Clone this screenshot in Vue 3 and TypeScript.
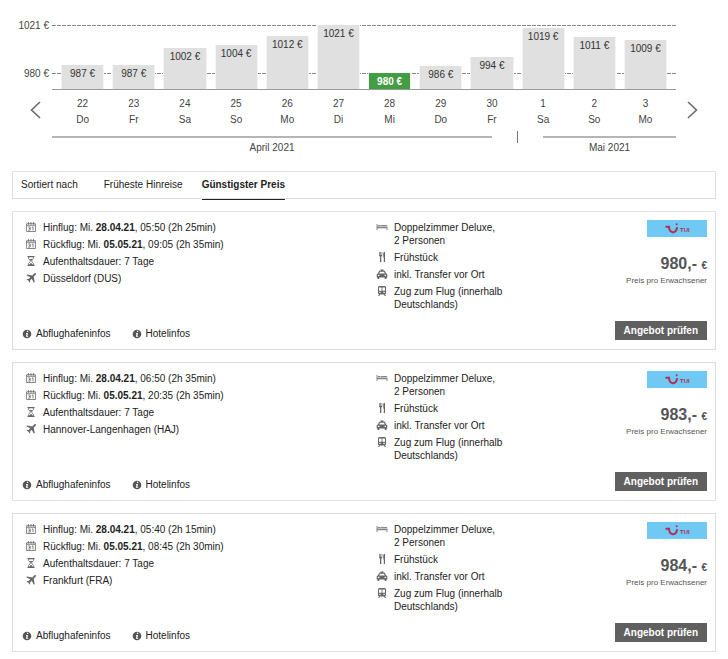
<script setup lang="ts">
interface Day {
  day: number
  weekday: string
  price: number
}

interface Offer {
  out: { date: string; rest: string }
  back: { date: string; rest: string }
  airport: string
  price: number
}

const days: Day[] = [
  { day: 22, weekday: 'Do', price: 987 },
  { day: 23, weekday: 'Fr', price: 987 },
  { day: 24, weekday: 'Sa', price: 1002 },
  { day: 25, weekday: 'So', price: 1004 },
  { day: 26, weekday: 'Mo', price: 1012 },
  { day: 27, weekday: 'Di', price: 1021 },
  { day: 28, weekday: 'Mi', price: 980 },
  { day: 29, weekday: 'Do', price: 986 },
  { day: 30, weekday: 'Fr', price: 994 },
  { day: 1, weekday: 'Sa', price: 1019 },
  { day: 2, weekday: 'So', price: 1011 },
  { day: 3, weekday: 'Mo', price: 1009 },
]

const prices = days.map((d) => d.price)
const minPrice = Math.min(...prices)
const maxPrice = Math.max(...prices)

// The cheapest bar keeps a base height so that its label still fits.
function barHeight(price: number): string {
  return `${Math.floor(16 + ((price - minPrice) / (maxPrice - minPrice)) * 48)}px`
}

const offers: Offer[] = [
  {
    out: { date: '28.04.21', rest: ', 05:50 (2h 25min)' },
    back: { date: '05.05.21', rest: ', 09:05 (2h 35min)' },
    airport: 'Düsseldorf (DUS)',
    price: 980,
  },
  {
    out: { date: '28.04.21', rest: ', 06:50 (2h 35min)' },
    back: { date: '05.05.21', rest: ', 20:35 (2h 35min)' },
    airport: 'Hannover-Langenhagen (HAJ)',
    price: 983,
  },
  {
    out: { date: '28.04.21', rest: ', 05:40 (2h 15min)' },
    back: { date: '05.05.21', rest: ', 08:45 (2h 30min)' },
    airport: 'Frankfurt (FRA)',
    price: 984,
  },
]
</script>

<template>
  <main class="page">
    <section class="calendar">
      <div class="side side-left">
        <span class="scale">{{ maxPrice }} €</span>
        <span class="scale">{{ minPrice }} €</span>
        <button class="arrow" type="button" aria-label="Zurück">
          <svg width="11" height="18" viewBox="0 0 11 18"><path d="M10 1 1.5 9 10 17" /></svg>
        </button>
      </div>

      <div class="chart">
        <div class="plot">
          <div class="guide guide-max"></div>
          <div class="guide guide-min"></div>
          <div v-for="d in days" :key="d.day" class="slot">
            <button
              type="button"
              class="bar"
              :class="{ active: d.price === minPrice }"
              :style="{ height: barHeight(d.price) }"
            >{{ d.price }} €</button>
          </div>
        </div>
        <div class="dates">
          <div v-for="d in days" :key="d.day" class="date">
            <span>{{ d.day }}</span>
            <span>{{ d.weekday }}</span>
          </div>
        </div>
        <div class="months">
          <div class="month april">April 2021</div>
          <div class="split"></div>
          <div class="month mai">Mai 2021</div>
        </div>
      </div>

      <div class="side side-right">
        <button class="arrow" type="button" aria-label="Weiter">
          <svg width="11" height="18" viewBox="0 0 11 18"><path d="M1 1 9.5 9 1 17" /></svg>
        </button>
      </div>
    </section>

    <nav class="sort">
      <span class="sort-label">Sortiert nach</span>
      <button type="button" class="tab">Früheste Hinreise</button>
      <button type="button" class="tab selected">Günstigster Preis</button>
    </nav>

    <section class="offers">
      <article v-for="o in offers" :key="o.price" class="card">
        <div class="flight">
          <ul class="list">
            <li v-for="(leg, i) in [o.out, o.back]" :key="i">
              <svg class="icon" viewBox="0 0 10 10">
                <path class="thin" d="M.6 1.7h8.800v7.800H.6zM.6 3.300h8.800M2.500 0v2.500M5 0v2.500M7.500 0v2.500" />
                <path class="thin" d="M2.200 4.900h2v3.200h-2M2.800 6.500h1.400M5.800 5.400l1.200-.6v3.600" />
              </svg>
              <span>{{ i === 0 ? 'Hinflug' : 'Rückflug' }}: Mi. <b>{{ leg.date }}</b>{{ leg.rest }}</span>
            </li>
            <li>
              <svg class="icon" viewBox="0 0 10 10">
                <path d="M1.500 0h7v1.300h-7zM1.500 8.700h7V10h-7z" />
                <path class="thin" d="M2.600 1v1.500L4.500 5 2.600 7.500V9M7.400 1v1.500L5.500 5l1.900 2.500V9" />
                <path d="M3.500 3h3L5 5zM3 8.900 5 6.800l2 2.100z" />
              </svg>
              <span>Aufenthaltsdauer: 7 Tage</span>
            </li>
            <li>
              <svg class="icon" viewBox="0 0 10 10">
                <path d="M9.800.2c.4.5.1 1.300-.5 1.900L7.700 3.700l1 5.200-.9.900L5.800 5.800 4 7.600l.2 1.300-.7.700-1-1.900L.5 6.600l.7-.7 1.400.2 1.700-1.800L.3 2.300l.9-.9 5.100 1L7.900.7C8.500.1 9.400-.2 9.800.2z" />
              </svg>
              <span>{{ o.airport }}</span>
            </li>
          </ul>
          <div class="links">
            <a v-for="name in ['Abflughafeninfos', 'Hotelinfos']" :key="name" href="#" class="info">
              <svg width="10" height="10" viewBox="0 0 10 10">
                <circle cx="5" cy="5" r="4.3" />
                <path class="mark" d="M4.900 1.800h1.300v1.200H4.900zM4 4h2l-.6 3h.8v.8H3.900L4.500 4.800H4z" />
              </svg>
              <span>{{ name }}</span>
            </a>
          </div>
        </div>

        <ul class="list services">
          <li>
            <svg class="icon" viewBox="0 0 12 10">
              <path d="M.5 2h1v2.500h10V8h-1V6.200h-9V8h-1zM2 3h2.500v1H2zM5 3h5.500l1 1H5z" opacity=".8" />
            </svg>
            <span>Doppelzimmer Deluxe,<br />2 Personen</span>
          </li>
          <li>
            <svg class="icon" viewBox="0 0 12 10">
              <path d="M3 0h.7v3h.6V0H5v3h.6V0h.7v3.500L5.300 4.800V10H4V4.800L3 3.500zM7.300.8C8 0 9 0 9 0v10H7.800V5.500h-.5z" />
            </svg>
            <span>Frühstück</span>
          </li>
          <li>
            <svg class="icon" viewBox="0 0 12 10">
              <path fill-rule="evenodd" d="M4.500.5h3v1.200h1.300L10 4.300l1.300 1V8.500h-.8V10H8.700V8.500H3.300V10H1.500V8.500H.7V5.300l1.300-1 1.200-2.600h1.300zM4 2.700l-.8 1.800h5.600L8 2.700zM1.900 5.800v1.100h1.500V5.800zM8.600 5.800v1.100h1.500V5.800z" />
            </svg>
            <span>inkl. Transfer vor Ort</span>
          </li>
          <li>
            <svg class="icon" viewBox="0 0 12 10">
              <path fill-rule="evenodd" d="M3 0h6l1 1v6.500l-1 .7 1 1.800H8.700L8 8.500H4L3.300 10H2l1-1.800-1-.7V1zM3 1.500v3.200h2.600V1.500zM6.400 1.500v3.200H9V1.500zM3.300 5.800v1.100h1.300V5.800zM7.400 5.800v1.100h1.300V5.800z" />
            </svg>
            <span>Zug zum Flug (innerhalb<br />Deutschlands)</span>
          </li>
        </ul>

        <div class="booking">
          <svg class="brand" width="60" height="17" viewBox="0 0 60 17" role="img" aria-label="TUI">
            <rect width="60" height="17" />
            <path d="M18.500 6.800h3.500c.2 6.700 7 7.600 8.200.4" />
            <circle cx="29.700" cy="4.200" r="1" />
            <text x="33" y="12">TUI</text>
          </svg>
          <p class="price">{{ o.price }},- <small>€</small></p>
          <p class="per">Preis pro Erwachsener</p>
          <button type="button" class="check">Angebot prüfen</button>
        </div>
      </article>
    </section>
  </main>
</template>

<style>
body {
  margin: 0;
  background: #fff;
}
</style>

<style scoped>
.page {
  padding: 19px 12px 6px;
  font: 10px/13px "Liberation Sans", Arial, sans-serif;
  color: #222;
}

button {
  margin: 0;
  padding: 0;
  border: 0;
  background: none;
  font: inherit;
  color: inherit;
  cursor: pointer;
}

.calendar {
  display: flex;
  color: #444;
}

.side {
  display: flex;
  flex-direction: column;
  flex: none;
  width: 40px;
}

.side-left {
  align-items: flex-end;
}

.scale {
  width: 37px;
  margin-right: 3px;
  margin-bottom: 35px;
  text-align: right;
  white-space: nowrap;
}

.arrow {
  height: 18px;
  margin-right: 11px;
}

.side-left .arrow {
  margin-top: -14px;
}

.side-right {
  align-items: flex-start;
  width: 29px;
  padding: 82px 0 0 11px;
}

.arrow svg {
  display: block;
  fill: none;
  stroke: #666;
  stroke-width: 1.5;
}

.chart {
  flex: 1;
  min-width: 0;
  padding-top: 6px;
}

.plot {
  position: relative;
  display: flex;
  align-items: flex-end;
  height: 64px;
  padding: 0 5px;
  border-bottom: 1px solid #999;
}

.guide {
  position: absolute;
  left: 0;
  right: 0;
  height: 1px;
  background: repeating-linear-gradient(90deg, #888 0 4px, transparent 4px 5px);
}

.guide-max {
  top: 0;
}

.guide-min {
  bottom: 15px;
}

.slot {
  position: relative;
  display: flex;
  align-items: flex-end;
  flex: 1;
  padding: 0 4px;
}

.bar {
  display: flex;
  justify-content: center;
  width: 100%;
  padding-top: 2px;
  border: solid #f4f4f4;
  border-width: 0 1px;
  background: #e0e0e0;
  color: #333;
  white-space: nowrap;
}

.bar.active {
  background: #439d43;
  color: #fff;
  font-weight: bold;
}

.dates {
  display: flex;
  padding: 7px 5px 0;
}

.date {
  display: flex;
  flex: 1;
  flex-direction: column;
  gap: 3px;
  text-align: center;
}

.months {
  display: flex;
  align-items: flex-start;
  margin-top: 5px;
}

.month {
  margin-top: 5px;
  padding-top: 3px;
  border-top: 2px solid #b5b5b5;
  text-align: center;
}

.april {
  flex: 440;
}

.mai {
  flex: 133;
}

.split {
  flex: none;
  width: 1px;
  height: 12px;
  margin: 0 25px;
  background: #777;
}

.sort {
  display: flex;
  align-items: flex-start;
  height: 26px;
  margin-top: 17px;
  padding-left: 8px;
  border: 1px solid #ddd;
}

.sort-label {
  padding: 6px 0;
}

.tab {
  margin-left: 26px;
  padding: 6px 0 8px;
  border-bottom: 1px solid transparent;
}

.tab.selected {
  margin-left: 19px;
  border-color: #222;
  font-weight: bold;
}

.offers {
  display: grid;
  gap: 12px;
  margin-top: 12px;
}

.card {
  display: grid;
  grid-template-columns: 354fr 150fr 181fr;
  padding: 8px 8px 9px 9px;
  border: 1px solid #ddd;
}

.flight {
  display: flex;
  flex-direction: column;
  justify-content: space-between;
}

.list {
  display: flex;
  flex-direction: column;
  gap: 4px;
  margin: 0;
  padding: 1px 0 0 4px;
  list-style: none;
}

.services {
  padding-left: 0;
}

.list li {
  display: flex;
  gap: 7px;
}

.services li {
  gap: 6px;
}

.icon {
  flex: none;
  width: 10px;
  height: 10px;
  margin-top: 1px;
  fill: #666;
}

.services .icon {
  width: 12px;
}

.thin {
  fill: none;
  stroke: #666;
  stroke-width: 0.8;
}

.links {
  display: flex;
  gap: 21px;
}

.info {
  display: flex;
  align-items: center;
  gap: 4px;
  color: inherit;
  text-decoration: none;
}

.info svg {
  fill: #555;
}

.info .mark {
  fill: #fff;
}

.booking {
  display: flex;
  flex-direction: column;
  align-items: flex-end;
  color: #555;
}

.brand {
  fill: #b32e55;
}

.brand rect {
  fill: #70c9f2;
}

.brand path {
  fill: none;
  stroke: #b32e55;
  stroke-width: 2;
}

.brand text {
  font: bold 6px "Liberation Sans", Arial, sans-serif;
}

.price {
  margin: 18px 0 0;
  font-size: 16px;
  font-weight: bold;
  line-height: 18px;
}

.price small {
  font-size: 10px;
}

.per {
  margin: 0;
  font-size: 8px;
  line-height: 11px;
}

.check {
  height: 19px;
  margin-top: 35px;
  padding: 0 9px;
  background: #606060;
  color: #fff;
  font-weight: bold;
}
</style>
